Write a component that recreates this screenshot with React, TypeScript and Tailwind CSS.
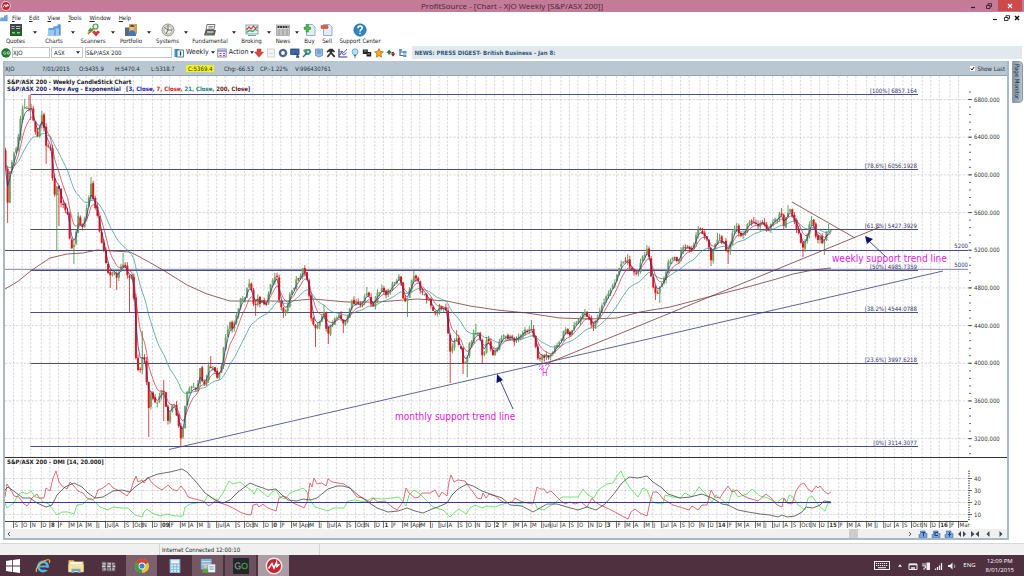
import type { ReactNode } from "react";

type Pt = [number, number];

/* ------------------------------------------------------------------ */
/* Chart data                                                          */
/* ------------------------------------------------------------------ */

const PRICE: Pt[] = [
  [5, 165], [8, 205], [10, 170], [13, 157], [17, 147], [20, 123], [23, 108], [27, 105], [29, 107], [32, 110], [35, 127], [37, 140], [39, 127], [42, 115], [44, 127], [46, 147], [50, 143], [52, 170], [54, 197], [57, 188], [59, 190], [61, 203], [65, 212], [68, 215], [70, 240], [73, 252], [76, 233], [78, 217], [81, 227], [83, 223], [87, 207], [91, 183], [92, 190], [95, 207], [98, 220], [100, 233], [103, 247], [106, 263], [109, 280], [113, 272], [116, 277], [120, 270], [124, 260], [128, 280], [132, 277], [134, 303], [136, 363], [140, 373], [143, 357], [146, 367], [148, 415], [151, 393], [154, 403], [157, 403], [160, 397], [163, 390], [166, 407], [168, 423], [171, 407], [174, 407], [177, 415], [181, 442], [183, 430], [184, 417], [187, 393], [190, 388], [193, 387], [197, 387], [200, 370], [203, 385], [206, 380], [209, 362], [213, 370], [217, 378], [220, 373], [223, 353], [227, 333], [230, 320], [232, 330], [235, 320], [238, 307], [242, 297], [245, 300], [249, 283], [252, 292], [254, 308], [257, 298], [262, 303], [267, 302], [270, 290], [273, 278], [277, 278], [280, 305], [283, 313], [288, 303], [292, 290], [297, 280], [303, 270], [307, 278], [309, 293], [311, 315], [314, 330], [318, 322], [324, 312], [328, 338], [331, 325], [335, 318], [339, 312], [344, 327], [348, 313], [352, 303], [357, 305], [362, 302], [367, 292], [370, 302], [373, 305], [377, 293], [382, 290], [385, 293], [389, 290], [393, 283], [398, 277], [401, 285], [404, 300], [407, 300], [410, 290], [412, 278], [416, 278], [419, 285], [423, 293], [428, 300], [433, 310], [436, 317], [440, 305], [444, 308], [447, 313], [449, 347], [451, 350], [454, 343], [457, 340], [461, 347], [464, 370], [466, 360], [469, 347], [474, 333], [478, 333], [481, 343], [483, 360], [487, 338], [490, 348], [494, 355], [497, 348], [502, 335], [507, 338], [512, 338], [515, 342], [519, 335], [524, 332], [528, 332], [532, 327], [535, 340], [537, 358], [543, 357], [547, 357], [552, 350], [557, 347], [561, 340], [566, 328], [570, 333], [575, 327], [580, 317], [584, 312], [588, 318], [593, 328], [597, 317], [602, 307], [607, 297], [612, 288], [616, 277], [620, 267], [623, 263], [627, 258], [631, 267], [636, 275], [640, 267], [644, 253], [648, 250], [651, 273], [654, 292], [657, 293], [661, 287], [664, 277], [668, 263], [672, 258], [677, 260], [682, 252], [687, 242], [691, 250], [695, 240], [698, 229], [703, 233], [708, 240], [711, 258], [714, 247], [717, 237], [722, 240], [725, 245], [728, 252], [731, 238], [733, 228], [738, 227], [740, 237], [744, 233], [748, 225], [753, 220], [757, 225], [763, 223], [768, 230], [773, 223], [780, 213], [784, 225], [789, 210], [793, 215], [797, 228], [800, 238], [804, 250], [807, 233], [810, 223], [813, 218], [816, 238], [819, 237], [823, 248], [825, 240], [828, 228], [831, 232],
];

const LOWS: Pt[] = [
  [7, 223], [46, 164], [56, 250], [59, 226], [74, 264], [110, 288], [116, 290], [129, 313], [148, 437], [163, 421], [180, 446], [255, 316], [283, 318], [315, 347], [328, 344], [344, 333], [407, 317], [451, 383], [463, 374], [468, 377], [483, 364], [543, 364], [593, 331], [655, 300], [660, 303], [711, 266], [728, 264], [804, 257], [824, 255],
];
const HIGHS: Pt[] = [[25, 99], [29, 95], [42, 111], [92, 177], [124, 253], [143, 331], [163, 380], [210, 356], [249, 279], [276, 274], [304, 267], [324, 305], [367, 287], [398, 274], [414, 271], [457, 330], [475, 324], [532, 320], [584, 309], [627, 254], [646, 245], [698, 226], [717, 233], [753, 217], [781, 208], [789, 205], [811, 217], [829, 224]];

const MA200: Pt[] = [[5, 289], [17, 282], [32, 270], [50, 258], [67, 254], [83, 253], [97, 250], [113, 251], [130, 252], [140, 257], [163, 270], [187, 285], [207, 294], [230, 301], [260, 301], [290, 301], [313, 299], [347, 302], [377, 302], [417, 299], [447, 301], [470, 306], [497, 310], [527, 313], [540, 315], [560, 318], [590, 319], [617, 318], [640, 312], [670, 307], [712, 296], [740, 289], [773, 280], [793, 274], [813, 270], [831, 268]];

const DI_MINUS: Pt[] = [[5, 497], [7, 484], [11, 490], [14, 496], [19, 497], [23, 503], [27, 506], [30, 502], [32, 498], [37, 494], [39, 498], [44, 498], [46, 488], [50, 491], [53, 478], [56, 471], [59, 482], [62, 486], [67, 489], [70, 482], [74, 486], [78, 491], [83, 493], [87, 498], [92, 500], [95, 498], [98, 490], [103, 488], [109, 483], [113, 488], [120, 491], [127, 496], [131, 490], [133, 483], [136, 476], [138, 482], [142, 480], [144, 483], [148, 477], [152, 483], [157, 487], [162, 490], [168, 485], [172, 489], [177, 491], [181, 486], [185, 491], [188, 497], [195, 499], [203, 501], [209, 506], [215, 501], [220, 503], [227, 505], [233, 508], [240, 512], [245, 514], [251, 515], [253, 505], [257, 504], [259, 507], [263, 504], [268, 508], [276, 511], [279, 498], [283, 496], [288, 498], [293, 503], [300, 506], [304, 508], [307, 502], [310, 483], [312, 487], [314, 478], [317, 484], [322, 483], [326, 486], [328, 479], [332, 482], [344, 484], [350, 488], [357, 497], [363, 498], [370, 502], [373, 498], [378, 502], [385, 501], [392, 507], [397, 510], [403, 502], [406, 488], [409, 493], [415, 498], [419, 497], [422, 493], [430, 493], [435, 490], [439, 497], [442, 492], [447, 496], [449, 482], [451, 475], [454, 482], [458, 480], [465, 481], [469, 487], [473, 492], [477, 498], [481, 499], [483, 493], [486, 498], [489, 494], [495, 496], [500, 500], [505, 503], [512, 502], [515, 498], [520, 501], [527, 503], [533, 504], [537, 487], [540, 489], [544, 489], [547, 493], [551, 491], [555, 495], [560, 500], [565, 504], [570, 502], [575, 504], [581, 502], [587, 507], [592, 498], [595, 502], [600, 505], [607, 508], [615, 512], [622, 516], [628, 519], [631, 512], [635, 509], [640, 513], [647, 516], [650, 502], [653, 492], [657, 492], [660, 495], [663, 499], [668, 502], [673, 505], [683, 508], [689, 510], [692, 506], [698, 510], [702, 505], [707, 505], [711, 490], [715, 497], [720, 498], [723, 493], [728, 486], [732, 492], [737, 490], [742, 495], [748, 498], [758, 501], [766, 494], [771, 498], [777, 505], [782, 507], [784, 498], [787, 503], [792, 504], [796, 491], [800, 485], [804, 483], [808, 489], [812, 492], [816, 486], [818, 488], [820, 486], [824, 491], [828, 494], [831, 492]];

const DI_PLUS: Pt[] = [[5, 503], [7, 508], [11, 505], [14, 503], [18, 495], [22, 492], [27, 494], [31, 491], [35, 497], [40, 498], [43, 502], [49, 504], [53, 510], [57, 515], [62, 512], [68, 512], [74, 514], [77, 505], [83, 504], [87, 500], [91, 498], [95, 502], [100, 507], [108, 510], [113, 507], [122, 508], [128, 508], [132, 512], [135, 515], [142, 517], [144, 512], [147, 509], [152, 513], [160, 516], [167, 514], [175, 516], [183, 516], [185, 507], [190, 504], [197, 503], [204, 502], [208, 495], [212, 498], [218, 500], [223, 493], [227, 485], [229, 481], [233, 484], [240, 482], [245, 486], [251, 490], [254, 494], [257, 488], [262, 492], [268, 497], [272, 492], [276, 490], [280, 497], [285, 499], [290, 493], [298, 490], [303, 488], [307, 492], [310, 500], [315, 507], [322, 509], [328, 511], [333, 508], [344, 508], [348, 501], [355, 500], [365, 502], [372, 498], [383, 499], [392, 498], [399, 497], [406, 506], [409, 495], [414, 490], [420, 494], [427, 501], [433, 507], [443, 510], [450, 517], [455, 512], [459, 509], [466, 514], [470, 508], [475, 505], [482, 508], [487, 506], [495, 507], [500, 505], [510, 502], [517, 504], [530, 502], [535, 503], [537, 508], [544, 510], [548, 507], [555, 503], [562, 497], [570, 497], [578, 497], [583, 489], [588, 495], [594, 498], [598, 490], [607, 484], [613, 483], [617, 476], [621, 471], [625, 480], [630, 488], [638, 497], [643, 488], [647, 490], [651, 500], [655, 503], [663, 504], [665, 495], [673, 497], [680, 498], [685, 493], [692, 497], [699, 487], [705, 493], [712, 502], [716, 495], [722, 500], [728, 505], [731, 495], [733, 489], [738, 497], [747, 494], [752, 489], [760, 496], [768, 498], [777, 503], [782, 498], [787, 502], [789, 495], [793, 497], [798, 505], [805, 510], [808, 498], [812, 496], [817, 503], [821, 508], [825, 511], [828, 503], [831, 503]];

const ADX: Pt[] = [[5, 490], [8, 487], [15, 492], [23, 498], [30, 498], [37, 503], [46, 507], [52, 505], [57, 495], [65, 487], [74, 483], [82, 487], [88, 493], [95, 498], [103, 497], [113, 491], [122, 490], [130, 492], [135, 487], [142, 482], [150, 477], [158, 474], [170, 472], [182, 469], [187, 472], [197, 483], [205, 493], [215, 500], [223, 503], [230, 500], [238, 492], [250, 483], [257, 486], [263, 488], [268, 490], [276, 489], [282, 495], [288, 500], [297, 501], [303, 499], [310, 500], [317, 498], [328, 489], [337, 486], [343, 486], [350, 488], [358, 495], [368, 502], [377, 508], [388, 512], [398, 511], [407, 508], [415, 511], [423, 513], [432, 509], [438, 507], [447, 503], [452, 495], [458, 489], [467, 484], [473, 486], [482, 491], [493, 495], [502, 498], [510, 505], [522, 506], [533, 512], [540, 508], [547, 504], [557, 504], [567, 507], [578, 510], [587, 507], [596, 510], [605, 504], [613, 495], [622, 483], [629, 477], [638, 478], [647, 476], [653, 482], [662, 488], [668, 494], [680, 498], [690, 497], [702, 494], [712, 498], [722, 504], [728, 505], [738, 510], [748, 512], [760, 514], [770, 515], [778, 517], [782, 515], [787, 517], [795, 516], [802, 512], [806, 507], [813, 508], [820, 505], [824, 501], [831, 502]];

const MONTHS =
  "S O N D 8 F M A M J Jul A S Oct N D 09 F M A M J Jul A S Oct N D 0 F M Apr M J Jul A S Oct N D 1 F M Apr M J Jul A S O N D 2 F M A M Jun Jul A S O N D 3 F M A M J Jul A S O N D 14 F M A M J Jul A S Oct N D 15 F M A M J Jul A S Oct N D 16 F Mar".split(" ");

const WEEK = 2.138;
const monthX = (i: number) => 5 + Math.round((8 + i * 9.268) / WEEK) * WEEK;

const noise = (n: number) => {
  const v = Math.sin(n * 12.9898) * 43758.5453;
  return (v - Math.floor(v)) * 2 - 1;
};

const at = (pts: Pt[], x: number) => {
  for (let i = 1; i < pts.length; i++) {
    const [x0, y0] = pts[i - 1];
    const [x1, y1] = pts[i];
    if (x <= x1) return y0 + ((y1 - y0) * (x - x0)) / (x1 - x0);
  }
  return pts[pts.length - 1][1];
};

const candles = Array.from({ length: 387 }, (_, i) => {
  const x = 5.5 + i * WEEK;
  const close = at(PRICE, x) + noise(i) * 3;
  const prev = i ? at(PRICE, x - WEEK) + noise(i - 1) * 3 : 150;
  const open = prev + noise(i + 500) * 1.5;
  let high = Math.min(open, close) - Math.abs(noise(i + 90)) * 4;
  let low = Math.max(open, close) + Math.abs(noise(i + 190)) * 4;
  for (const [lx, ly] of LOWS) if (Math.abs(lx - x) < WEEK / 2) low = Math.max(low, ly);
  for (const [hx, hy] of HIGHS) if (Math.abs(hx - x) < WEEK / 2) high = Math.min(high, hy);
  return { x, open, close, high, low };
});

const ema = (n: number, seed: number): Pt[] => {
  let v = seed;
  return candles.map((c) => {
    v += (c.close - v) * (2 / (n + 1));
    return [c.x, v];
  });
};

const path = (pts: Pt[]) => "M" + pts.map(([x, y]) => `${x.toFixed(1)} ${y.toFixed(1)}`).join("L");

const FIBS: [number, string][] = [
  [94.5, "[100%] 6857.164"],
  [169.5, "[78.6%] 6056.1928"],
  [229.5, "[61.8%] 5427.3929"],
  [270.5, "[50%] 4985.7359"],
  [312.5, "[38.2%] 4544.0788"],
  [363.5, "[23.6%] 3997.6218"],
  [446.5, "[0%] 3114.3077"],
];

const PRICES = [6800, 6400, 6000, 5600, 5200, 4800, 4400, 4000, 3600, 3200];
const priceY = (p: number) => 99.5 + (6800 - p) * 0.0942;

function Chart() {
  return (
    <svg viewBox="5 76 1002 453" className="block h-auto w-full bg-white" role="img" aria-label="S&P/ASX 200 weekly candlestick chart">
      <g stroke="#c6c6c6" strokeWidth="0.7" strokeDasharray="2.2 1.6">
        {MONTHS.map((_, i) => <path key={i} d={`M${monthX(i)} 76V457M${monthX(i)} 459V521`} />)}
        {PRICES.map((p) => <path key={p} d={`M5 ${priceY(p)}H968`} />)}
        {[478.5, 490.5, 502.5, 514.5].map((y) => <path key={y} d={`M5 ${y}H968`} />)}
      </g>

      <g stroke="#4d4d86" strokeWidth="1">
        {FIBS.map(([y]) => <path key={y} d={`M30.500 ${y}H918`} />)}
        <path d="M30.500 95V120" stroke="#c05060" strokeWidth="0.7" />
        <path d="M5 250.500H968" />
        <path d="M5 269.300H968" stroke="#8080b0" />
      </g>

      <path d={path(MA200)} fill="none" stroke="#7a3a3a" strokeWidth="0.8" />

      <g>
        {candles.map((c, i) => {
          const up = c.close < c.open;
          const top = Math.min(c.open, c.close);
          return (
            <g key={i}>
              <path d={`M${c.x} ${c.high}V${c.low}`} stroke={up ? "#3c8a3c" : "#d01c1c"} strokeWidth="0.8" />
              <rect x={c.x - 1} y={top} width="2" height={Math.max(1, Math.abs(c.open - c.close))} fill={up ? "#6fa562" : "#e81414"} />
            </g>
          );
        })}
      </g>

      <g fill="none" strokeWidth="0.7">
        <path d={path(ema(21, 163))} stroke="#2c9090" />
        <path d={path(ema(7, 163))} stroke="#cc2c38" />
        <path d={path(ema(3, 170))} stroke="#28288c" />
      </g>

      <g fill="none" strokeWidth="0.8">
        <path d="M169 449.500L943 271" stroke="#3c3c86" />
        <path d="M547 363.500L880 227" stroke="#7a3838" />
        <path d="M792 202L855 238" stroke="#7a3838" />
        <path d="M513 409L499 378M885 256L868 240" stroke="#20206c" />
      </g>
      <path d="M497 374L496.500 383L503 380Z M865 236L867 244L873 239Z" fill="#101070" />

      <g fill="none" stroke="#e040e0" strokeWidth="0.9">
        <path d="M539 367c1-3 4-3 4-1s-3 2-4 4M545 366c2-3 5-2 4 0s-3 2-1 3M541 370l3-2" />
      </g>
      <g className="fill-[#dd22dd] font-['DejaVu_Sans_Condensed','DejaVu_Sans',sans-serif] text-[8px]">
        <text x="542" y="376">H</text>
      </g>
      <g className="fill-[#dd22dd] font-['DejaVu_Sans_Condensed','DejaVu_Sans',sans-serif] text-[10px]">
        <text x="395" y="420">monthly support trend line</text>
        <text x="832" y="262">weekly support trend line</text>
      </g>

      <g className="fill-[#33336e] font-['DejaVu_Sans_Condensed','DejaVu_Sans',sans-serif] text-[6px]" textAnchor="end">
        {FIBS.map(([y, label]) => <text key={label} x="917" y={y - 2}>{label}</text>)}
        <text x="968" y="248">5200</text>
        <text x="968" y="267">5000</text>
      </g>

      <g stroke="#444" strokeWidth="0.8">
        {PRICES.map((p) => <path key={p} d={`M968 ${priceY(p)}H972`} />)}
        {Array.from({ length: 49 }, (_, i) => <path key={i} d={`M969 ${92 + i * 7.536}H971`} />)}
        {Array.from({ length: 21 }, (_, i) => <path key={i} d={`M968 ${471.2 + i * 2.42}H970`} />)}
        {[478.5, 490.5, 502.5, 514.5].map((y) => <path key={y} d={`M968 ${y}H972`} />)}
      </g>
      <g className="fill-[#333] font-['DejaVu_Sans_Condensed','DejaVu_Sans',sans-serif] text-[6px]">
        {PRICES.map((p) => <text key={p} x="974" y={priceY(p) + 2}>{p}.000</text>)}
        {[40, 30, 20, 10].map((v, i) => <text key={v} x="974" y={480.5 + i * 12}>{v}</text>)}
        {MONTHS.map((m, i) => (
          <text key={i} x={monthX(i) + 1} y="527" fontWeight={/\d/.test(m) ? 700 : 400}>{m}</text>
        ))}
      </g>

      <g fill="none" strokeWidth="0.8">
        <path d={path(DI_PLUS)} stroke="#50e050" />
        <path d={path(DI_MINUS)} stroke="#d84858" />
        <path d={path(ADX)} stroke="#484848" />
        <path d="M5 502.500H831" stroke="#3434b4" strokeWidth="1" />
      </g>

      <path d="M5 457.500H1007" stroke="#333" strokeWidth="1" />
      <path d="M5 521.500H968" stroke="#444" strokeWidth="1" />
      <g stroke="#444" strokeWidth="0.8">
        {MONTHS.map((_, i) => <path key={i} d={`M${monthX(i)} 521.500V528`} />)}
      </g>

      <g className="fill-[#222] font-['DejaVu_Sans_Condensed','DejaVu_Sans',sans-serif] text-[6px] font-bold">
        <text x="7" y="84">S&amp;P/ASX 200 - Weekly CandleStick Chart</text>
        <text x="7" y="91" className="fill-[#26266e]">S&amp;P/ASX 200 - Mov Avg - Exponential</text>
        <text x="126" y="91" className="fill-[#26266e]">
          [<tspan fill="#2020c0">3, Close, </tspan><tspan fill="#d42020">7, Close, </tspan><tspan fill="#208080">21, Close, </tspan><tspan fill="#701818">200, Close</tspan>]
        </text>
        <text x="7" y="464">S&amp;P/ASX 200 - DMI [14, 20.000]</text>
      </g>
    </svg>
  );
}

/* ------------------------------------------------------------------ */
/* Icons                                                               */
/* ------------------------------------------------------------------ */

const Big = ({ children }: { children: ReactNode }) => (
  <svg viewBox="0 0 14 14" className="block size-3.5" aria-hidden="true">{children}</svg>
);
const Small = ({ children }: { children: ReactNode }) => (
  <svg viewBox="0 0 10 10" className="block size-2.5" aria-hidden="true">{children}</svg>
);
const Task = ({ children }: { children: ReactNode }) => (
  <svg viewBox="0 0 18 18" className="block size-4" aria-hidden="true">{children}</svg>
);

const ProfitLogo = ({ className }: { className: string }) => (
  <svg viewBox="0 0 18 18" className={className} aria-hidden="true">
    <circle cx="9" cy="9" r="8.500" fill="#f7e9ea" />
    <circle cx="9" cy="9" r="7" fill="#c4222e" />
    <path d="M3.500 11.500L7 6.500L9 11L11.500 5.500L12 9.500L14.500 7" fill="none" stroke="#fff" strokeWidth="1.600" />
  </svg>
);

const Page = () => <path d="M3.500 1.500h6l2.500 2.500v8.500h-8.500z" fill="#e2edf8" stroke="#7f9cc0" strokeWidth="0.800" />;

const TOOLS: { label: string; width: string; menu: boolean; icon: ReactNode }[] = [
  { label: "Quotes", width: "w-[31px]", menu: true, icon: <Big><rect x="1" y="1" width="12" height="12" fill="#3c4444" /><path d="M2.500 3.500h3M7 3.500h4.500M2.500 5.500h3M7 5.500h4" stroke="#b8b8b8" strokeWidth="1.200" /><rect x="2" y="7.500" width="10" height="4.500" fill="#1d6a25" /><path d="M3 9.800h3M8 9.800h3" stroke="#60e860" strokeWidth="1.500" /></Big> },
  { label: "Charts", width: "w-[30px]", menu: true, icon: <Big><path d="M1 12.500L1.500 5H6L6.500 3.500L10.500 3V1.500L13.500 1V12.500Z" fill="#5f9ce0" /><path d="M.5 12.800L1.500 7H7L8 5.500H12.500L12.500 12.800Z" fill="#9cc8f4" /><path d="M8 5.500V12.500M12.800 2V12" stroke="#3f7cc4" strokeWidth="0.900" /></Big> },
  { label: "Scanners", width: "w-8", menu: true, icon: <Big><circle cx="9.500" cy="3.500" r="2.500" fill="#dff0e0" stroke="#4a9a50" strokeWidth="1.200" /><path d="M7.500 5.500L2 11" stroke="#b8862c" strokeWidth="2" /><path d="M1.500 8.500L4.500 4.500L7.500 8Z" fill="#3da23f" /><path d="M6 9L10 13.500L14 9L11.500 7.500L10 9L8.500 7.500Z" fill="#d8323c" /></Big> },
  { label: "Portfolio", width: "w-7", menu: true, icon: <Big><rect x="1" y="4.500" width="8" height="8.500" fill="#5d6874" /><rect x="5" y="1" width="8" height="10" fill="#c8a060" /><circle cx="8" cy="5" r="2.200" fill="#e5bd88" /><path d="M4 13c0-4 2-5.500 4-5.500s4 1.500 4 5.500z" fill="#4078b8" /><path d="M6 3.500c1-2 4-2 4 .5z" fill="#4d3524" /></Big> },
  { label: "Systems", width: "w-[29px]", menu: true, icon: <Big><circle cx="7" cy="7" r="6" fill="#d3d3cf" stroke="#8c8c88" strokeWidth="0.900" /><circle cx="7" cy="7" r="4" fill="#eeeeea" stroke="#a4a4a0" strokeWidth="0.600" /><path d="M7 2v5h4M3.500 4.500L7 7L5 11" stroke="#6a6a68" strokeWidth="1" fill="none" /></Big> },
  { label: "Fundamental", width: "w-10", menu: true, icon: <Big><path d="M4 1.500h8l-1 5H3z" fill="#f4f4f0" stroke="#666" strokeWidth="0.900" /><path d="M5.500 3.500h5M5.200 5h4.500" stroke="#777" strokeWidth="0.800" /><path d="M2.500 7h10.500l-1.500 5.500h-10.500z" fill="#555b58" /><path d="M4 9h6.500" stroke="#e8e8e0" strokeWidth="1.300" /><path d="M3 11h7" stroke="#aab0a8" strokeWidth="0.800" strokeDasharray="1.500 0.800" /></Big> },
  { label: "Broking", width: "w-[27px]", menu: true, icon: <Big><rect x="1" y="2" width="12" height="9" fill="#e6f3f0" stroke="#6aa8a0" strokeWidth="0.900" /><path d="M1.500 7l2.500-3 2 2 2.500-3 2 2.500 2-2" stroke="#d84048" strokeWidth="1.200" fill="none" /><path d="M1.500 9.500l3-2 3 1 2.500-2 2.500 1" stroke="#2f9c60" strokeWidth="1.200" fill="none" /><path d="M3 12.500h8" stroke="#70a0a0" /></Big> },
  { label: "News", width: "w-5", menu: true, icon: <Big><rect x="0.500" y="2" width="13" height="10.500" fill="#d6d6d6" stroke="#8c8c8c" strokeWidth="0.600" /><path d="M1.500 4h11" stroke="#333" strokeWidth="2" strokeDasharray="2 0.600" /><path d="M1.500 7h3M5.500 7h3M9.500 7h3M1.500 9h3M5.500 9h3M9.500 9h3M1.500 11h3M5.500 11h3M9.500 11h3" stroke="#777" strokeWidth="0.800" /></Big> },
  { label: "Buy", width: "w-[17px]", menu: false, icon: <Big><Page /><path d="M1 4h2V1.500h2.500v2.500h2v2.500h-2v2.500H3V6.500H1z" fill="#4bb545" stroke="#2a8a2c" strokeWidth="0.500" /></Big> },
  { label: "Sell", width: "w-[18px]", menu: false, icon: <Big><Page /><rect x="1" y="2.500" width="7" height="3" rx="0.500" fill="#e06038" stroke="#b53c20" strokeWidth="0.500" /></Big> },
  { label: "Support Center", width: "w-12", menu: false, icon: <Big><circle cx="7" cy="7" r="6.200" fill="#2f86bd" stroke="#1c5e8e" strokeWidth="0.600" /><path d="M5 5.200c0-3 4.200-2.600 4.200-.4C9.200 6.500 7 6.500 7 8.500M7 9.800v1.500" stroke="#fff" strokeWidth="1.500" fill="none" /></Big> },
];

const QUICK: { name: string; icon: ReactNode }[] = [
  { name: "Download", icon: <Small><path d="M3 1h4v3h2.500L5 9.300.5 4H3z" fill="#d9453c" stroke="#b23c34" strokeWidth="0.500" /></Small> },
  { name: "Blank page", icon: <Small><rect x="1.500" y="1" width="7" height="8" fill="#f4f4f4" stroke="#ccc" strokeWidth="0.800" /><path d="M3 5.500h4" stroke="#d4d4d4" /></Small> },
  { name: "Settings", icon: <Small><circle cx="5" cy="5" r="3" fill="none" stroke="#4a6390" strokeWidth="2.200" /><path d="M5 .7v1.500M5 7.800v1.500M.7 5h1.500M7.800 5h1.500" stroke="#4a6390" strokeWidth="1.300" /></Small> },
  { name: "Monitor", icon: <Small><rect x="0.700" y="1" width="8.300" height="5.500" fill="#3c6aa8" stroke="#28436c" strokeWidth="0.800" /><path d="M5 5l4 4M6 9h3" stroke="#33507c" strokeWidth="1.400" /></Small> },
  { name: "Search", icon: <Small><path d="M1 2l3-1h4l1.500 3-2.500 3H4z" fill="#4aa05a" /><path d="M1 9l4-4" stroke="#2e6a9e" strokeWidth="1.500" /><circle cx="6" cy="3.800" r="1.700" fill="#bfe0ec" stroke="#2e6a9e" strokeWidth="0.700" /></Small> },
  { name: "Report", icon: <Small><path d="M1.500 1h7v6.500L5 9 1.500 7.500z" fill="#9ebde4" stroke="#5279b4" strokeWidth="0.700" /><path d="M3 3h4M3 5h4" stroke="#5279b4" strokeWidth="0.800" /></Small> },
  { name: "Tools", icon: <Small><path d="M.5 3.500L3.500.8h3L9 3.500l-1 1L6.500 3.500 6 4.500 9.300 8.300 8 9.500 5 6 2 9.500.8 8.300 4 4.800 3 3.500 1.500 4.800z" fill="#33302c" /></Small> },
  { name: "Line chart", icon: <Small><path d="M1 .8v8.200h8.200" stroke="#30308c" strokeWidth="1.200" fill="none" /><path d="M2 7l2-4 1.500 2L9 1M2.500 3l3 4 3-2" stroke="#5050b4" strokeWidth="1" fill="none" /></Small> },
  { name: "Ideas", icon: <Small><circle cx="5" cy="3.800" r="3" fill="#b8e0f4" stroke="#58a0cc" strokeWidth="0.800" /><path d="M3.800 7.500h2.400M4 9h2" stroke="#4a6a80" strokeWidth="1.100" /></Small> },
  { name: "Layout", icon: <Small><path d="M.8 1.500h5v2.500h3.400v4.500H4.500V6H.8z" fill="#222" /><path d="M2 3h2.500M5.500 6h2.500" stroke="#ddd" strokeWidth="0.700" /></Small> },
  { name: "Favourites", icon: <Small><path d="M5 .6l1.300 2.900 3.100.3L7 6l.7 3.200L5 7.600 2.300 9.200 3 6 .6 3.800l3.100-.3z" fill="#f6a824" stroke="#a86414" strokeWidth="0.700" /></Small> },
  { name: "Up and down", icon: <Small><path d="M3.200 1.500L6 5H.6z" fill="#277a34" /><path d="M2.200 5h2v1.500h-2z" fill="#277a34" /><path d="M7 8.800L4.800 5.500h4.500z" fill="#8c2024" /><path d="M6 4h2v1.500H6z" fill="#8c2024" /></Small> },
  { name: "Hierarchy", icon: <Small><path d="M2 1v6.500h3M2 4h3" stroke="#4a6ea0" strokeWidth="1.200" fill="none" /><rect x="1" y="1" width="3" height="2" fill="#5b9acc" /><rect x="5" y="3" width="3.500" height="2.500" fill="#5b9acc" /><rect x="5" y="6.500" width="3.500" height="2.500" fill="#5b9acc" /></Small> },
];

const Caret = () => <svg viewBox="0 0 4 3" className="block h-[3px] w-1 shrink-0" aria-hidden="true"><path d="M0 .3h4L2 2.700z" fill="#222" /></svg>;

const WindowGlyphs = ({ color }: { color: string }) => (
  <>
    <button type="button" aria-label="Minimize" className="flex w-3.5 items-center justify-center">
      <svg viewBox="0 0 6 6" className="size-1.5"><path d="M1 4.500h4" stroke={color} strokeWidth="1.200" /></svg>
    </button>
    <button type="button" aria-label="Restore" className="flex w-2.5 items-center justify-center">
      <svg viewBox="0 0 6 6" className="size-1.5"><path d="M.5 2.500h3.500v3h-3.500zM2 2.500v-1.800h3.500v3h-1.500" fill="none" stroke={color} strokeWidth="0.900" /></svg>
    </button>
  </>
);

/* ------------------------------------------------------------------ */
/* Page sections                                                       */
/* ------------------------------------------------------------------ */

function TitleBar() {
  return (
    <header className="grid h-3 shrink-0 grid-cols-[1fr_auto_1fr] items-center bg-[#c47b97]">
      <ProfitLogo className="ml-px size-2.5" />
      <h1 className="font-['Open_Sans',sans-serif] text-[8px] leading-3 text-[#4a2636]">ProfitSource - [Chart - XJO Weekly [S&amp;P/ASX 200]]</h1>
      <div className="flex h-full justify-end gap-1">
        <WindowGlyphs color="#3a1c28" />
        <button type="button" aria-label="Close" className="mr-0.5 flex h-[11px] w-6 items-center justify-center bg-[#cb4a4c]">
          <svg viewBox="0 0 6 6" className="size-1.5"><path d="M1 1l4 4M5 1L1 5" stroke="#fff" strokeWidth="1.100" /></svg>
        </button>
      </div>
    </header>
  );
}

function MenuBar() {
  return (
    <nav className="flex h-[11px] shrink-0 items-center text-[6px]">
      <svg viewBox="0 0 10 8" className="h-2 w-[9px]" aria-hidden="true"><path d="M0 7.500l.5-4h4v-2l4-1v7z" fill="#6ba3e0" /></svg>
      <div className="ml-[3px] flex flex-1 gap-2">
        {["File", "Edit", "View", "Tools", "Window", "Help"].map((m) => (
          <button key={m} type="button"><span className="underline">{m[0]}</span>{m.slice(1)}</button>
        ))}
      </div>
      <WindowGlyphs color="#222" />
      <button type="button" aria-label="Close chart" className="mr-0.5 flex w-2.5 items-center justify-center">
        <svg viewBox="0 0 6 6" className="size-1.5"><path d="M1 1l4 4M5 1L1 5" stroke="#111" strokeWidth="1.500" /></svg>
      </button>
    </nav>
  );
}

function ToolBar() {
  return (
    <div className="flex h-[23px] shrink-0 text-[6px]">
      {TOOLS.map((t) => (
        <div key={t.label} className="flex">
          <button type="button" className={`${t.width} flex flex-col items-center whitespace-nowrap leading-[7px]`}>
            {t.icon}
            <span>{t.label}</span>
          </button>
          {t.menu && (
            <button type="button" aria-label={`${t.label} menu`} className="flex w-2 items-center justify-center pb-1"><Caret /></button>
          )}
        </div>
      ))}
    </div>
  );
}

function SymbolBar() {
  return (
    <div className="flex h-[13px] shrink-0 items-center text-[7px]">
      <button type="button" aria-label="Go" className="ml-px">
        <svg viewBox="0 0 10 10" className="block size-2.5" aria-hidden="true">
          <circle cx="5" cy="5" r="4.700" fill="#1f7a34" />
          <path d="M4.500 3.800C2.500 2.800 1.500 6.800 4.500 6.200V5.200M6 5a1.200 1.300 0 1 0 2.400 0a1.200 1.300 0 1 0-2.400 0" fill="none" stroke="#e4f6e4" strokeWidth="0.800" />
        </svg>
      </button>
      <input aria-label="Symbol code" defaultValue="XJO" className="ml-px h-[11px] w-[38px] border border-[#c4c8cc] bg-white text-[6px]" />
      <div className="relative ml-px flex h-[11px] w-8 items-center border border-[#c4c8cc]">
        <select aria-label="Exchange" defaultValue="ASX" className="h-full w-full appearance-none bg-white pl-0.5 text-[6px]">
          <option>ASX</option>
        </select>
        <span className="pointer-events-none absolute right-0.5"><Caret /></span>
      </div>
      <input aria-label="Security name" defaultValue="S&P/ASX 200" className="ml-0.5 h-[11px] w-[87px] border border-[#c4c8cc] bg-white text-[6px]" />
      <button type="button" className="ml-0.5 flex items-center gap-0.5">
        <Small><rect x="0.500" y="1" width="5" height="8" fill="#3a9cc0" /><rect x="3" y="2" width="6.500" height="7" fill="#e8f4f8" stroke="#2c6c94" strokeWidth="0.800" /><path d="M6.500 3.500v4" stroke="#333" strokeWidth="1.200" /></Small>
        Weekly
        <Caret />
      </button>
      <button type="button" className="ml-0.5 flex items-center gap-0.5">
        <Small><rect x="0.700" y="1" width="8.500" height="8" fill="#eef" stroke="#7474a8" strokeWidth="0.800" /><path d="M1 3h8" stroke="#8888c0" strokeWidth="1.500" /><path d="M2.500 5.500h2M6 5.500h2M2.500 7.500h2M6 7.500h2" stroke="#c05070" strokeWidth="1.100" /></Small>
        Action
        <Caret />
      </button>
      <div className="flex gap-0.5">
        {QUICK.map((q) => <button key={q.name} type="button" aria-label={q.name}>{q.icon}</button>)}
      </div>
      <p className="ml-1 mr-0.5 flex h-full flex-1 items-center bg-[#e2e9ee] pl-0.5 text-[6px] font-bold text-[#2f5878]">
        NEWS: PRESS DIGEST- British Business - Jan 8:
      </p>
    </div>
  );
}

function ChartPanel() {
  return (
    <section className="min-w-0 flex-1 border-x-2 border-b-2 border-[#aab8c2]">
      <div className="flex h-[15px] items-center border-b border-[#93a3b0] bg-[#b8c7d2] text-[6px] text-[#26303a]">
        <span className="w-[37px]">XJO</span>
        <span className="w-[37px]">7/01/2015</span>
        <span className="w-9">O:5435.9</span>
        <span className="w-9">H:5470.4</span>
        <span className="w-[35px]">L:5318.7</span>
        <span className="w-[38px]"><mark className="bg-[#f4f420] px-0.5 text-[#26303a]">C:5369.4</mark></span>
        <span className="w-9">Chg:-66.53</span>
        <span className="w-[35px]">CP:-1.22%</span>
        <span className="flex-1">V:996430761</span>
        <label className="flex items-center gap-0.5 pr-0.5">
          <input type="checkbox" defaultChecked className="peer sr-only" />
          <svg viewBox="0 0 6 6" className="size-[5px] bg-white" aria-hidden="true"><path d="M1 3l1.500 1.800L5 1.200" fill="none" stroke="#111" strokeWidth="1.200" /></svg>
          Show Last
        </label>
      </div>
      <Chart />
      <div className="flex h-[9px] items-center bg-[#f0f0f0] text-[#444]">
        <button type="button" aria-label="Scroll left" className="w-2">
          <svg viewBox="0 0 8 8" className="size-2"><path d="M5 2L3 4l2 2" fill="none" stroke="#444" strokeWidth="0.900" /></svg>
        </button>
        <div className="flex h-full flex-1 justify-end pr-12"><span className="h-full w-[9px] bg-[#cdcdcd]" /></div>
        <button type="button" aria-label="Scroll right" className="w-2">
          <svg viewBox="0 0 8 8" className="size-2"><path d="M3 2l2 2-2 2" fill="none" stroke="#444" strokeWidth="0.900" /></svg>
        </button>
        <div className="ml-1 mr-px flex gap-[3px]">
          {["Zoom in", "Zoom out", "Zoom reset"].map((n, i) => (
            <button key={n} type="button" aria-label={n} className="w-2.5">
              <svg viewBox="0 0 9 8" className="block h-2 w-2.5">
                <path d="M.5 7.500V4.500h1.500V1h4.500v2.500h2v4z" fill="#7ea8e0" stroke="#3d68a8" strokeWidth="0.600" />
                <path d={i === 0 ? "M3 2.500h4M5 2.500v4" : i === 1 ? "M6.500 2.500h-3v3h3" : "M5 2v4.500M3.500 4.500h3"} stroke="#1f3f88" strokeWidth="1.100" fill="none" />
              </svg>
            </button>
          ))}
          {["M3.500 1v6L.5 4zM5.500 1v6l3-3z", "M.5 1v6l3.500-3zM8.500 1v6L5 4z", "M6 1v6L3 4z", "M3 1v6l3-3z"].map((d, i) => (
            <button key={d} type="button" aria-label={["Widen bars", "Narrow bars", "Step back", "Step forward"][i]} className="w-2.5">
              <svg viewBox="0 0 9 8" className="block h-2 w-2.5"><path d={d} fill="#3a4652" /></svg>
            </button>
          ))}
        </div>
      </div>
    </section>
  );
}

function StatusBar() {
  return (
    <footer className="mt-[3px] flex h-3 shrink-0 items-center border-t border-[#d8d8d8] bg-[#f0f0f0] text-[6px]">
      <span className="h-full w-40 border-r border-[#d4d4d4]" />
      <span className="flex h-full w-40 items-center border-r border-[#d4d4d4] pl-0.5">Internet Connected 12:00:10</span>
    </footer>
  );
}

const APPS: { name: string; tone: string; icon: ReactNode }[] = [
  { name: "Internet Explorer", tone: "", icon: <Task><circle cx="9" cy="9.500" r="5.200" fill="none" stroke="#4fb4e8" strokeWidth="3" /><path d="M5 9.500h10" stroke="#4fb4e8" strokeWidth="2.200" /><path d="M11 11h6v2.500h-6z" fill="#4f303f" /><path d="M2 15.500C-1 12 9 2 15 2c2.500 0 1.500 2.500 1 3.500" fill="none" stroke="#f0c040" strokeWidth="1.300" /></Task> },
  { name: "File Explorer", tone: "", icon: <Task><path d="M.5 2.500h6l1 1.500h10v11.500h-17z" fill="#e8c464" /><path d="M2 4.500h14v3H2z" fill="#fbf6e4" /><path d="M.5 7h17v9h-17z" fill="#f8e09c" /><path d="M4 17v-5h10v5h-2.500v-2.500h-5V17z" fill="#68acdc" /></Task> },
  { name: "Media", tone: "", icon: <Task><path d="M1 4l15 1v10L1 15z" fill="#7d757a" /><path d="M2 6.500h4M8 6.500h6M1 9.500h4M7 9.500h4M13 9.500h3M3 12.500h4M10 12.500h5" stroke="#d8d4d6" strokeWidth="1.400" /><path d="M6 4v11M12 5v9" stroke="#3c2c34" /></Task> },
  { name: "Chrome", tone: "bg-[#7b606d]", icon: <Task><circle cx="9" cy="9" r="8" fill="#e3c43a" /><path d="M9 9L2.100 5A8 8 0 0 1 15.900 5Z" fill="#d8412f" /><path d="M9 9L2.100 5A8 8 0 0 0 9 17Z" fill="#3e9e48" /><circle cx="9" cy="9" r="3.800" fill="#fff" /><circle cx="9" cy="9" r="2.900" fill="#3f7ed0" /></Task> },
  { name: "Calculator", tone: "", icon: <Task><rect x="3" y="1" width="12" height="16" rx="1" fill="#8fbde0" /><rect x="4.500" y="2.500" width="9" height="3.500" fill="#e8f4fc" /><path d="M4.500 8.500h9M4.500 11.500h9M4.500 14.500h9" stroke="#e4f0fa" strokeWidth="1.800" strokeDasharray="2 1.500" /></Task> },
  { name: "Contacts", tone: "bg-[#735864]", icon: <Task><rect x="1" y="1" width="12" height="12" fill="#84b4dc" /><path d="M2 4h10M2 7h10" stroke="#d4e6f6" /><rect x="9" y="7" width="8" height="9" fill="#eef4fa" stroke="#8aa" strokeWidth="0.500" /><path d="M10.500 10h5M10.500 12.500h5" stroke="#68a" /><circle cx="6" cy="9.500" r="2" fill="#f0c080" /><path d="M2.500 16.500c0-6 7-6 7 0z" fill="#58a83c" /></Task> },
  { name: "GO", tone: "bg-[#6b505d]", icon: <Task><rect x="0" y="0" width="18" height="18" fill="#22282a" /><path d="M8 6.500C5 4 1.500 6.500 2.500 9.500S7 13 8 11.500V9.500H6" fill="none" stroke="#888" strokeWidth="1.300" /><circle cx="13" cy="9" r="3" fill="none" stroke="#3f8a4c" strokeWidth="1.400" /></Task> },
  { name: "ProfitSource", tone: "bg-[#ab9ba2]", icon: <ProfitLogo className="block size-[18px]" /> },
];

function TaskBar() {
  return (
    <div className="flex h-[21px] shrink-0 items-center bg-[#4f303f] font-['Open_Sans',sans-serif] text-white">
      <button type="button" aria-label="Start" className="flex w-[26px] items-center justify-center">
        <svg viewBox="0 0 14 14" className="size-3.5"><path d="M0 2l6-.9V6.600H0zM6.800 1L14 0v6.600H6.800zM0 7.400h6v5.500L0 12zM6.800 7.400H14V14l-7.200-1z" fill="#fff" /></svg>
      </button>
      <div className="ml-px flex h-full gap-0.5">
        {APPS.map((a) => (
          <button key={a.name} type="button" aria-label={a.name} className={`flex h-full w-[31px] items-center justify-center ${a.tone}`}>{a.icon}</button>
        ))}
      </div>
      <div className="ml-auto flex items-center">
        <svg viewBox="0 0 16 9" className="h-[9px] w-4" aria-hidden="true"><rect x="0.500" y="0.500" width="15" height="8" fill="none" stroke="#eee" /><path d="M2 2.500h12M2 4.500h12" stroke="#eee" strokeDasharray="1.200 0.800" /><path d="M4 6.700h8" stroke="#eee" /></svg>
        <svg viewBox="0 0 4 3" className="ml-2 h-[3px] w-1" aria-hidden="true"><path d="M0 2.700h4L2 .3z" fill="#eee" /></svg>
        <div className="ml-1.5 flex gap-[3px]">
          <Small><path d="M1 3h8v5.500H1z" fill="none" stroke="#eee" /><path d="M1 3.500h8M3 7h4" stroke="#eee" strokeWidth="1.500" /></Small>
          <Small><path d="M2 2v3M4 2v3M1.500 5h3v2h-1.500v2" stroke="#eee" strokeWidth="0.900" fill="none" /><rect x="5.500" y="1.500" width="3.500" height="7.500" fill="#eee" /></Small>
          <Small><path d="M1.500 9V7.500M3.500 9V6M5.500 9V4.500M7.500 9V2" stroke="#eee" strokeWidth="1.300" /></Small>
          <Small><path d="M1 4h2l2.500-2.500v7L3 6H1z" fill="#eee" /><path d="M7 3.500c1 1 1 2.500 0 3.500" stroke="#ccc" strokeWidth="0.900" fill="none" /></Small>
        </div>
        <span className="ml-1.5 text-[6px]">ENG</span>
        <time className="ml-2.5 mr-2.5 text-center text-[6px] leading-[9px]">12:09 PM<br />8/01/2015</time>
      </div>
    </div>
  );
}

export default function App() {
  return (
    <div className="flex min-h-screen w-full flex-col bg-white font-['DejaVu_Sans_Condensed','DejaVu_Sans',sans-serif] text-[#222]">
      <TitleBar />
      <MenuBar />
      <ToolBar />
      <SymbolBar />
      <main className="mt-0.5 flex pl-[3px]">
        <ChartPanel />
        <aside className="w-[15px] shrink-0 pl-[3px] pr-px">
          <button type="button" className="flex h-[42px] w-full items-center justify-center rounded-r-sm border border-[#8d9aa6] bg-linear-to-r from-[#8596a8] to-[#b4c0cc] text-[6px] text-[#1e2a36] [writing-mode:vertical-rl]">
            Page Monitor
          </button>
        </aside>
      </main>
      <StatusBar />
      <TaskBar />
    </div>
  );
}
